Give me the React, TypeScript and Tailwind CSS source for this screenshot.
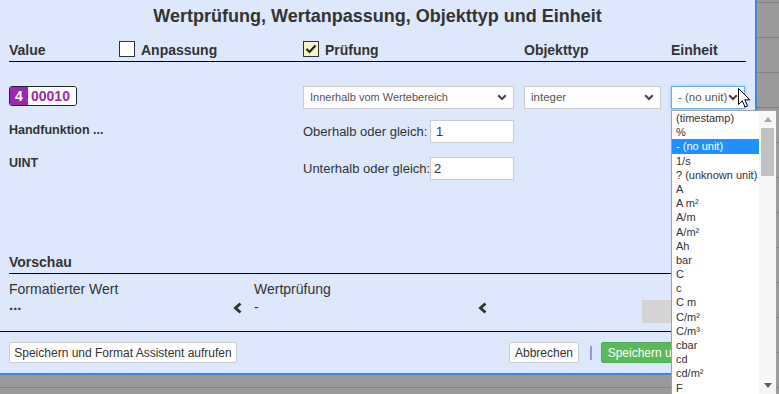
import React from "react";

const units = [
  "(timestamp)",
  "%",
  "- (no unit)",
  "1/s",
  "? (unknown unit)",
  "A",
  "A m²",
  "A/m",
  "A/m²",
  "Ah",
  "bar",
  "C",
  "c",
  "C m",
  "C/m²",
  "C/m³",
  "cbar",
  "cd",
  "cd/m²",
  "F",
  "F/m",
];

function Chevron() {
  return (
    <svg width="10" height="7" viewBox="0 0 10 7" className="shrink-0">
      <polyline points="1.2,1.2 5,5 8.8,1.2" fill="none" stroke="#444" strokeWidth="2.1" />
    </svg>
  );
}

function Select({ value, width, focused = false, small = false }: { value: string; width: string; focused?: boolean; small?: boolean }) {
  return (
    <div
      className={`${width} h-[23px] bg-white flex items-center justify-between pl-[6px] pr-[6px] ${
        focused ? "border border-[#66afe9] shadow-[0_0_3px_rgba(102,175,233,0.7)]" : "border border-[#ccc]"
      }`}
    >
      <span className={`${small ? "text-[11px]" : "text-[11.5px]"} text-[#555] whitespace-nowrap`}>{value}</span>
      <Chevron />
    </div>
  );
}

function Checkbox({ checked }: { checked: boolean }) {
  return (
    <div
      className={`w-[16px] h-[16px] border border-[#333] flex items-center justify-center ${
        checked ? "bg-[#f3f6c4]" : "bg-white"
      }`}
    >
      {checked && (
        <svg width="12" height="10" viewBox="0 0 12 10">
          <polyline points="1.5,5 4.5,8 10.5,1.5" fill="none" stroke="#222" strokeWidth="2.2" />
        </svg>
      )}
    </div>
  );
}

function Back() {
  return (
    <svg width="10" height="12" viewBox="0 0 10 12">
      <polyline points="7.5,1.5 2.5,6 7.5,10.5" fill="none" stroke="#333" strokeWidth="3" />
    </svg>
  );
}

function Cursor() {
  return (
    <svg width="13" height="21" viewBox="0 0 13 21" className="absolute left-[67px] top-[2px] z-20">
      <path
        d="M0.5 0.5 L0.5 16.5 L4.3 12.8 L7 19 L9.5 18 L6.8 11.8 L11.8 11.8 Z"
        fill="#fff"
        stroke="#000"
        strokeWidth="1"
        strokeLinejoin="round"
      />
    </svg>
  );
}

function UnitList() {
  return (
    <div className="absolute left-0 top-[24px] w-[106px] h-[285px] bg-white border border-[#a0a0a0] flex z-10">
      <div className="w-[87px] overflow-hidden">
        {units.map((u) => (
          <div
            key={u}
            className={`h-[14.2px] leading-[14.2px] pl-[4px] text-[11px] whitespace-nowrap ${
              u === "- (no unit)" ? "bg-[#1e90ff] text-white" : "text-[#333]"
            }`}
          >
            {u}
          </div>
        ))}
      </div>
      <div className="w-[17px] bg-[#f6f6f6] flex flex-col">
        <div className="h-[17px] flex items-center justify-center">
          <svg width="8" height="5" viewBox="0 0 8 5">
            <polygon points="0,5 4,0 8,5" fill="#a3a3a3" />
          </svg>
        </div>
        <div className="h-[48px] mx-[2px] bg-[#c1c1c1]" />
        <div className="flex-1" />
        <div className="h-[17px] flex items-center justify-center">
          <svg width="8" height="5" viewBox="0 0 8 5">
            <polygon points="0,0 8,0 4,5" fill="#606060" />
          </svg>
        </div>
      </div>
    </div>
  );
}

export default function App() {
  return (
    <div className="relative w-[779px] h-[394px] overflow-hidden flex items-start bg-[#9a9a9a] bg-[repeating-linear-gradient(to_bottom,#808080_0px,#808080_1px,#9a9a9a_1px,#9a9a9a_35px)] bg-[position:0_2px] font-['Liberation_Sans',Arial,sans-serif] text-[#333]">
      {/* Dialog */}
      <div className="w-[757px] h-[375px] shrink-0 bg-[#dee8fc] border-r-2 border-b-2 border-[#3f89d2] flex flex-col">
        <div className="h-[32px] flex items-center justify-center text-[18px] font-bold whitespace-nowrap">
          Wertprüfung, Wertanpassung, Objekttyp und Einheit
        </div>

        {/* Header row */}
        <div className="mt-[8px] mx-[9px] h-[22px] border-b border-black grid grid-cols-[110px_184px_221px_147px_74px] text-[14px] font-bold leading-[21px]">
          <div>Value</div>
          <div className="flex items-start gap-[6px]">
            <div className="mt-[1px]">
              <Checkbox checked={false} />
            </div>
            <span>Anpassung</span>
          </div>
          <div className="flex items-start gap-[6px]">
            <div className="mt-[1px]">
              <Checkbox checked={true} />
            </div>
            <span>Prüfung</span>
          </div>
          <div>Objekttyp</div>
          <div>Einheit</div>
        </div>

        {/* Main row */}
        <div className="h-[190px] pt-[24px] px-[9px] grid grid-cols-[294px_221px_147px_74px]">
          <div className="flex flex-col items-start">
            <div className="flex h-[20px] border border-[#222] rounded-[3px] overflow-hidden text-[14px] font-bold leading-[18px]">
              <span className="w-[18px] bg-[#9c27b0] text-white text-center">4</span>
              <span className="bg-white text-[#9c27b0] pl-[3px] pr-[6px]">00010</span>
            </div>
            <div className="mt-[16px] text-[12.5px] font-bold leading-[16px] whitespace-nowrap">Handfunktion ...</div>
            <div className="mt-[17px] text-[12.5px] font-bold leading-[16px]">UINT</div>
          </div>
          <div className="flex flex-col">
            <Select value="Innerhalb vom Wertebereich" width="w-[211px]" small />
            <div className="mt-[11px] flex items-center text-[13px] whitespace-nowrap">
              <span className="w-[127px] shrink-0">Oberhalb oder gleich:</span>
              <div className="w-[84px] shrink-0 h-[23px] bg-white border border-[#ccc] pl-[5px] leading-[21px]">1</div>
            </div>
            <div className="mt-[14px] flex items-center text-[13px] whitespace-nowrap">
              <span className="w-[127px] shrink-0">Unterhalb oder gleich:</span>
              <div className="w-[84px] shrink-0 h-[23px] bg-white border border-[#ccc] pl-[3px] leading-[21px]">2</div>
            </div>
          </div>
          <div>
            <Select value="integer" width="w-[137px]" />
          </div>
          <div className="relative">
            <Select value="- (no unit)" width="w-[74px]" focused />
            <UnitList />
            <Cursor />
          </div>
        </div>

        {/* Vorschau */}
        <div className="mx-[9px] h-[22px] border-b border-black text-[14px] font-bold leading-[20px]">Vorschau</div>
        <div className="h-[58px] border-b border-black px-[9px] flex text-[14px]">
          <div className="w-[224px] shrink-0 pt-[7px]">
            <div className="leading-[16px]">Formatierter Wert</div>
            <div className="leading-[16px] font-bold text-[15px]">...</div>
          </div>
          <div className="w-[21px] shrink-0 pt-[28px]">
            <Back />
          </div>
          <div className="w-[224px] shrink-0 pt-[7px]">
            <div className="leading-[16px]">Wertprüfung</div>
            <div className="leading-[16px] mt-[2px]">-</div>
          </div>
          <div className="w-[164px] shrink-0 pt-[28px]">
            <Back />
          </div>
          <div className="pt-[26px]">
            <div className="w-[103px] h-[23px] bg-[#d4d4d4]" />
          </div>
        </div>

        {/* Footer */}
        <div className="pt-[10px] px-[9px] flex items-center text-[12px] whitespace-nowrap">
          <button className="shrink-0 w-[228px] h-[21px] bg-white border border-[#ccc] rounded-[2px]">
            Speichern und Format Assistent aufrufen
          </button>
          <button className="shrink-0 ml-[272px] w-[70px] h-[21px] bg-white border border-[#ccc] rounded-[2px]">
            Abbrechen
          </button>
          <span className="shrink-0 ml-[10px] text-[14px] text-[#337ab7]">|</span>
          <button className="shrink-0 ml-[8px] h-[21px] px-[6px] bg-[#5cb85c] border border-[#4cae4c] text-white rounded-[2px]">
            Speichern und schließen
          </button>
        </div>
      </div>
    </div>
  );
}
